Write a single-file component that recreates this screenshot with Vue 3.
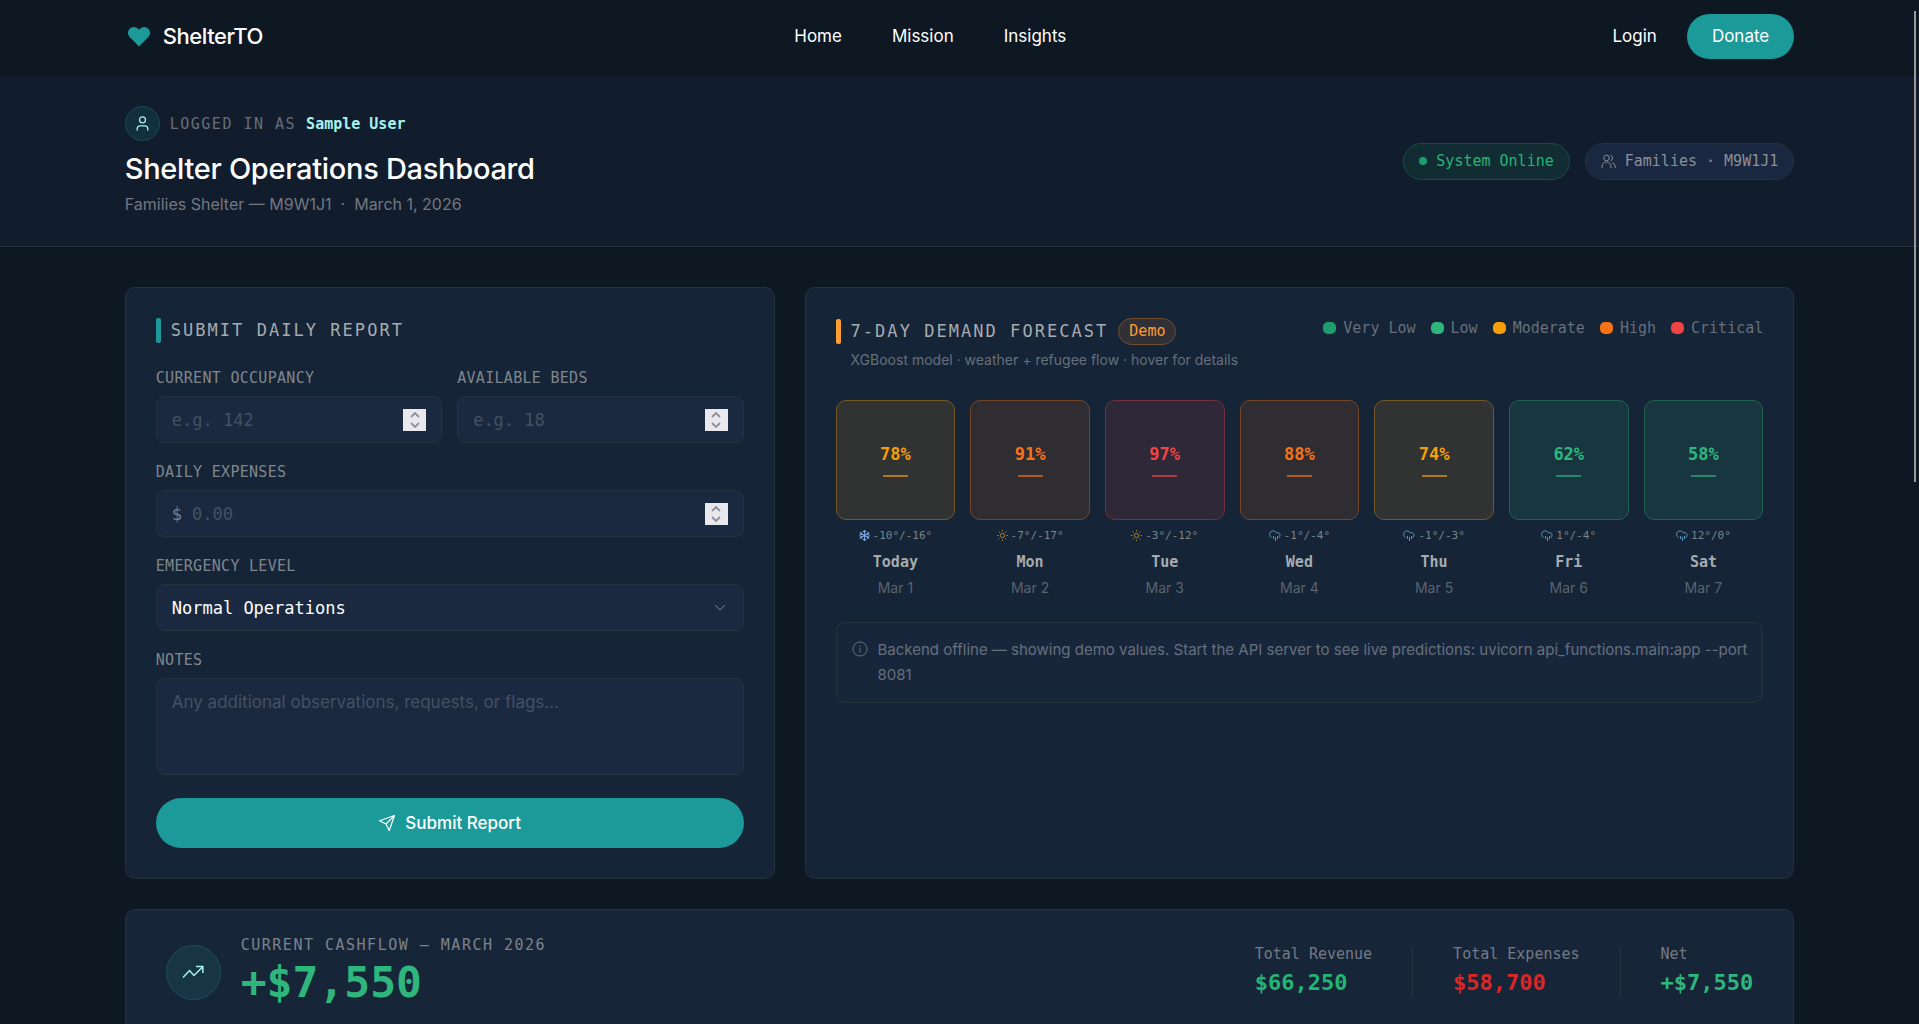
<template>
  <div class="page">
    <nav class="nav">
      <a href="#" class="nav__brand">
        <svg class="nav__heart" viewBox="0 0 24 22" aria-hidden="true">
          <path d="M12 21.5 2.2 11.6a6.2 6.2 0 0 1 0-8.8 6.2 6.2 0 0 1 8.8 0l1 1 1-1a6.2 6.2 0 0 1 8.8 0 6.2 6.2 0 0 1 0 8.8z" fill="currentColor" />
        </svg>
        ShelterTO
      </a>
      <div class="nav__links">
        <a v-for="link in links" :key="link" href="#">{{ link }}</a>
      </div>
      <div class="nav__actions">
        <a href="#">Login</a>
        <button type="button" class="donate">Donate</button>
      </div>
    </nav>

    <header class="header">
      <div class="header__info">
        <div class="user">
          <span class="user__avatar">
            <svg width="13" height="15" viewBox="0 0 13 15" fill="none" stroke="currentColor" stroke-width="1.3" aria-hidden="true">
              <circle cx="6.5" cy="3.8" r="3" />
              <path d="M1.2 14.6v-1.8a3 3 0 0 1 3-3h4.6a3 3 0 0 1 3 3v1.8" />
            </svg>
          </span>
          <span class="user__label">LOGGED IN AS</span>
          <span class="user__name">Sample User</span>
        </div>
        <h1>Shelter Operations Dashboard</h1>
        <p>Families Shelter — M9W1J1 &nbsp;·&nbsp; March 1, 2026</p>
      </div>
      <div class="header__pills">
        <span class="pill pill--online"><i class="pill__dot"></i>System Online</span>
        <span class="pill">
          <svg width="15" height="15" viewBox="0 0 15 15" fill="none" stroke="currentColor" aria-hidden="true">
            <circle cx="5.5" cy="4" r="2.8" />
            <path d="M1 14v-1.500a4.500 4.500 0 0 1 9 0V14M9.500 1.300a2.800 2.800 0 0 1 0 5.400M11.200 8.800a4 4 0 0 1 3 4V14" />
          </svg>
          Families · M9W1J1
        </span>
      </div>
    </header>

    <main class="content">
      <div class="grid">
        <form class="card report" @submit.prevent>
          <h2 class="title title--report">SUBMIT DAILY REPORT</h2>
          <div class="fields">
            <div v-for="f in numberFields" :key="f.id" class="field" :class="{ 'field--half': !f.prefix }">
              <label :for="f.id">{{ f.label }}</label>
              <div class="box">
                <span v-if="f.prefix" class="box__prefix">{{ f.prefix }}</span>
                <input :id="f.id" v-model="form[f.id]" type="number" :placeholder="f.placeholder" />
                <span class="spinner">
                  <svg width="10" height="16" viewBox="0 0 10 16" fill="none" stroke="currentColor" stroke-width="1.8" aria-hidden="true">
                    <path d="M1 5l4-4 4 4M1 11l4 4 4-4" />
                  </svg>
                </span>
              </div>
            </div>
            <div class="field">
              <label for="level">EMERGENCY LEVEL</label>
              <div class="box">
                <select id="level" v-model="form.level">
                  <option>Normal Operations</option>
                  <option>Elevated</option>
                  <option>Critical</option>
                </select>
                <svg class="chevron" width="12" height="8" viewBox="0 0 12 8" fill="none" stroke="currentColor" aria-hidden="true">
                  <path d="M1 1l5 5 5-5" />
                </svg>
              </div>
            </div>
            <div class="field">
              <label for="notes">NOTES</label>
              <textarea id="notes" v-model="form.notes" placeholder="Any additional observations, requests, or flags..."></textarea>
            </div>
          </div>
          <button type="submit" class="submit">
            <svg width="18" height="18" viewBox="0 0 18 18" fill="none" stroke="currentColor" stroke-width="1.2" stroke-linejoin="round" aria-hidden="true">
              <path d="M16.500 1.500 1.500 6.800l6.500 3.200 3.200 6.500zM16.500 1.500 8 10" />
            </svg>
            Submit Report
          </button>
        </form>

        <section class="card forecast">
          <div class="forecast__head">
            <div>
              <h2 class="title title--forecast">7-DAY DEMAND FORECAST <span class="demo">Demo</span></h2>
              <p class="forecast__sub">XGBoost model · weather + refugee flow · hover for details</p>
            </div>
            <ul class="legend">
              <li v-for="l in legend" :key="l.level" :class="'level-' + l.level"><i></i>{{ l.name }}</li>
            </ul>
          </div>
          <div class="days">
            <div v-for="d in days" :key="d.day" class="day" :class="'level-' + d.level">
              <div class="day__tile">
                <strong>{{ d.value }}%</strong>
                <i></i>
              </div>
              <div class="day__weather">
                <svg v-if="d.icon === 'snow'" class="snow" width="11" height="11" viewBox="0 0 12 12" fill="none" stroke="currentColor" stroke-width="1.100" aria-hidden="true">
                  <path d="M6 0v12M.8 3l10.400 6M11.200 3.000.8 9M4 .8l2 2 2-2M4 11.200l2-2 2 2M.4 5.600l2.600-.7-.7-2.600M11.600 6.400l-2.600.7.7 2.600M.4 6.400l2.600.7-.7 2.600M11.600 5.600 9 4.900l.7-2.600" />
                </svg>
                <svg v-else-if="d.icon === 'sun'" class="sun" width="11" height="11" viewBox="0 0 12 12" fill="none" stroke="currentColor" aria-hidden="true">
                  <circle cx="6" cy="6" r="2.300" />
                  <path d="M6 0v1.600M6 10.400V12M0 6h1.600M10.400 6H12M1.800 1.800l1.100 1.100M9.100 9.100l1.100 1.100M1.800 10.200l1.100-1.100M9.100 2.900l1.100-1.100" />
                </svg>
                <svg v-else class="rain" width="12" height="11" viewBox="0 0 12 11" fill="none" stroke="currentColor" aria-hidden="true">
                  <path d="M2.500 7.500A3.500 3.500 0 1 1 7.200 2.800a2.600 2.600 0 1 1 2.300 4.900M4.500 6v3M6.500 7v4M8.500 6v3" />
                </svg>
                {{ d.temp }}
              </div>
              <div class="day__name">{{ d.day }}</div>
              <div class="day__date">{{ d.date }}</div>
            </div>
          </div>
          <div class="notice">
            <svg width="16" height="16" viewBox="0 0 16 16" fill="none" stroke="currentColor" aria-hidden="true">
              <circle cx="8" cy="8" r="7" />
              <path d="M8 7v4.500M8 4.500V6" />
            </svg>
            <p>Backend offline — showing demo values. Start the API server to see live predictions: uvicorn api_functions.main:app --port 8081</p>
          </div>
        </section>
      </div>

      <section class="card cashflow">
        <span class="cashflow__icon">
          <svg width="22" height="14" viewBox="0 0 22 14" fill="none" stroke="currentColor" stroke-width="1.500" aria-hidden="true">
            <path d="M1 12.500l6.500-7 4.500 5L20.500 2M14 1.500h6.800v6.500" />
          </svg>
        </span>
        <div>
          <div class="cashflow__label">CURRENT CASHFLOW — MARCH 2026</div>
          <div class="cashflow__value">+$7,550</div>
        </div>
        <dl class="totals">
          <div v-for="t in totals" :key="t.label">
            <dt>{{ t.label }}</dt>
            <dd :class="t.tone">{{ t.value }}</dd>
          </div>
        </dl>
      </section>
    </main>
    <div class="scroll-thumb"></div>
  </div>
</template>

<script setup>
import { reactive } from 'vue';

const links = ['Home', 'Mission', 'Insights'];

const form = reactive({
  occupancy: '',
  beds: '',
  expenses: '',
  level: 'Normal Operations',
  notes: '',
});

const numberFields = [
  { id: 'occupancy', label: 'CURRENT OCCUPANCY', placeholder: 'e.g. 142' },
  { id: 'beds', label: 'AVAILABLE BEDS', placeholder: 'e.g. 18' },
  { id: 'expenses', label: 'DAILY EXPENSES', placeholder: '0.00', prefix: '$' },
];

const legend = [
  { name: 'Very Low', level: 'verylow' },
  { name: 'Low', level: 'low' },
  { name: 'Moderate', level: 'moderate' },
  { name: 'High', level: 'high' },
  { name: 'Critical', level: 'critical' },
];

const days = [
  { day: 'Today', date: 'Mar 1', value: 78, level: 'moderate', icon: 'snow', temp: '-10°/-16°' },
  { day: 'Mon', date: 'Mar 2', value: 91, level: 'high', icon: 'sun', temp: '-7°/-17°' },
  { day: 'Tue', date: 'Mar 3', value: 97, level: 'critical', icon: 'sun', temp: '-3°/-12°' },
  { day: 'Wed', date: 'Mar 4', value: 88, level: 'high', icon: 'rain', temp: '-1°/-4°' },
  { day: 'Thu', date: 'Mar 5', value: 74, level: 'moderate', icon: 'rain', temp: '-1°/-3°' },
  { day: 'Fri', date: 'Mar 6', value: 62, level: 'low', icon: 'rain', temp: '1°/-4°' },
  { day: 'Sat', date: 'Mar 7', value: 58, level: 'low', icon: 'rain', temp: '12°/0°' },
];

const totals = [
  { label: 'Total Revenue', value: '$66,250', tone: 'revenue' },
  { label: 'Total Expenses', value: '$58,700', tone: 'expenses' },
  { label: 'Net', value: '+$7,550', tone: 'net' },
];
</script>

<style>
html {
  background: #0e1822;
  scrollbar-width: none;
}

body {
  margin: 0;
}
</style>

<style scoped>
.page {
  --sans: "Inter", "Liberation Sans", sans-serif;
  --mono: "DejaVu Sans Mono", "Liberation Mono", monospace;
  --line: #26313c;
  min-height: 100vh;
  padding-bottom: 30px;
  box-sizing: border-box;
  background: #0e1822;
  color: #fff;
  font-family: var(--sans);
}

.page *,
.page *::before {
  box-sizing: border-box;
}

a {
  color: inherit;
  text-decoration: none;
}

h1,
h2,
p,
ul,
dl,
dd {
  margin: 0;
  padding: 0;
}

button,
input,
select,
textarea {
  font: inherit;
  color: inherit;
  border: 0;
  margin: 0;
  background: none;
  outline: 0;
}

/* navigation */
.nav {
  display: flex;
  justify-content: space-between;
  align-items: center;
  height: 76px;
  padding: 0 6.5% 4px;
  font-size: 17px;
}

.nav__brand {
  display: flex;
  align-items: center;
  gap: 12px;
  padding-left: 2px;
  font-size: 22px;
  font-weight: 500;
  letter-spacing: -0.02em;
}

.nav__heart {
  width: 24px;
  height: 21px;
  color: #1c9999;
}

.nav__links {
  display: flex;
  gap: 50px;
}

.nav__actions {
  display: flex;
  align-items: center;
  gap: 30px;
  padding-left: 15px;
}

.donate {
  height: 45px;
  padding: 0 25px;
  border-radius: 23px;
  background: #1c9999;
}

/* page header */
.header {
  display: flex;
  justify-content: space-between;
  align-items: center;
  padding: 30px 6.5%;
  background: #111d2d;
  border-bottom: 1px solid var(--line);
}

.user {
  display: flex;
  align-items: center;
  gap: 10px;
  font: 15px var(--mono);
}

.user__avatar {
  display: grid;
  place-items: center;
  width: 35px;
  height: 35px;
  border: 1px solid #1a4b54;
  border-radius: 50%;
  background: #122f3d;
  color: #a5f3f0;
}

.user__label {
  color: #686d75;
  letter-spacing: 0.1em;
}

.user__name {
  color: #a5f3f0;
  font-weight: bold;
}

h1 {
  margin-top: 8px;
  font-size: 29px;
  line-height: 40px;
  font-weight: 500;
  letter-spacing: -0.01em;
}

.header p {
  margin-top: 3px;
  color: #73777f;
  font-size: 16px;
  line-height: 24px;
}

.header__pills {
  display: flex;
  gap: 15px;
}

.pill {
  display: flex;
  align-items: center;
  gap: 9px;
  height: 37px;
  padding: 0 15px;
  border: 1px solid #28323e;
  border-radius: 19px;
  background: #192740;
  color: #8b9099;
  font: 15px var(--mono);
}

.pill--online {
  border-color: #15503f;
  background: #122c34;
  color: #22b573;
}

.pill__dot {
  width: 8px;
  height: 8px;
  border-radius: 50%;
  background: #1d9e6c;
}

/* cards */
.content {
  display: grid;
  gap: 30px;
  padding: 40px 6.5% 0;
}

.grid {
  display: grid;
  grid-template-columns: 65fr 99fr;
  gap: 30px;
}

.card {
  min-width: 0;
  padding: 30px;
  border: 1px solid var(--line);
  border-radius: 10px;
  background: #152436;
}

.title {
  display: flex;
  align-items: center;
  gap: 10px;
  color: #a6abb0;
  font: 17px/25px var(--mono);
  letter-spacing: 0.12em;
}

.title::before {
  content: "";
  width: 5px;
  height: 25px;
  border-radius: 2px;
  background: #1c9999;
}

.title--forecast::before {
  background: #ff9d2e;
}

/* report form */
.fields {
  display: flex;
  flex-wrap: wrap;
  gap: 20px 15px;
  margin: 26px 0 23px;
}

.field {
  width: 100%;
}

.field--half {
  flex: 1;
  width: auto;
}

.field label {
  display: block;
  margin-bottom: 8px;
  color: #80868d;
  font: 15px/19px var(--mono);
  letter-spacing: 0.02em;
}

.box,
textarea {
  border: 1px solid #28323c;
  border-radius: 8px;
  background: #1a2940;
}

.box {
  position: relative;
  display: flex;
  align-items: center;
  height: 47px;
  padding: 0 15px;
  font: 17px var(--mono);
}

.box__prefix {
  margin-right: 10px;
  color: #747d88;
}

.box input {
  flex: 1;
  min-width: 0;
  padding: 0;
  appearance: textfield;
}

.box select {
  width: 100%;
  height: 100%;
  padding: 0;
  appearance: none;
}

.box option {
  background: #1a2940;
}

.chevron {
  position: absolute;
  right: 17px;
  color: #7d8794;
  pointer-events: none;
}

.spinner {
  display: grid;
  place-items: center;
  width: 23px;
  height: 22px;
  background: #e9e9ed;
  color: #8f8f9d;
}

textarea {
  display: block;
  width: 100%;
  height: 97px;
  padding: 11px 15px;
  font-size: 17px;
  line-height: 24px;
  resize: none;
}

input::placeholder,
textarea::placeholder {
  color: #445163;
  opacity: 1;
}

.submit {
  display: flex;
  justify-content: center;
  align-items: center;
  gap: 9px;
  width: 100%;
  height: 50px;
  border-radius: 25px;
  background: #1c9999;
  font-size: 17px;
  font-weight: 500;
}

/* forecast */
.forecast__head {
  display: flex;
  justify-content: space-between;
  align-items: flex-start;
}

.demo {
  padding: 0 10px;
  border: 1px solid #70502f;
  border-radius: 14px;
  background: #303036;
  color: #ff9d2e;
  font-size: 15px;
  letter-spacing: 0;
}

.forecast__sub {
  margin-left: 15px;
  color: #66707c;
  font-size: 14px;
  line-height: 30px;
}

.legend {
  display: flex;
  gap: 15px;
  list-style: none;
  color: #66707c;
  font: 15px/20px var(--mono);
}

.legend li {
  display: flex;
  align-items: center;
  gap: 7px;
}

.legend i {
  width: 13px;
  height: 12px;
  border-radius: 5px;
  background: var(--level);
}

.level-verylow {
  --level: #1d9e6c;
}

.level-low {
  --level: #2eb67d;
}

.level-moderate {
  --level: #f59e0b;
}

.level-high {
  --level: #f97316;
}

.level-critical {
  --level: #ef4444;
}

.days {
  display: grid;
  grid-template-columns: repeat(7, 1fr);
  gap: 15px;
  margin-top: 25px;
}

.day {
  text-align: center;
}

.day__tile {
  display: flex;
  flex-direction: column;
  justify-content: center;
  align-items: center;
  gap: 11px;
  aspect-ratio: 1;
  padding-top: 2px;
  border: 1px solid color-mix(in srgb, var(--level) 42%, #152436);
  border-radius: 10px;
  background: color-mix(in srgb, var(--level) 12%, #152436);
  color: var(--level);
  font: 17px/20px var(--mono);
}

.day__tile i {
  width: 25px;
  height: 2px;
  background: var(--level);
  opacity: 0.65;
}

.day__weather {
  display: flex;
  justify-content: center;
  align-items: center;
  gap: 3px;
  margin-top: 8px;
  color: #7b838c;
  font: 11px/16px var(--mono);
}

.snow {
  color: #7ba6e0;
}

.sun {
  color: #b38a2c;
}

.rain {
  color: #5793b8;
}

.day__name {
  margin-top: 5px;
  color: #a6abb0;
  font: bold 15px/26px var(--mono);
}

.day__date {
  color: #59636f;
  font-size: 14px;
  line-height: 26px;
}

.notice {
  display: flex;
  gap: 10px;
  margin-top: 21px;
  padding: 14px 10px 15px 15px;
  border: 1px solid #28323c;
  border-radius: 8px;
  background: #18263c;
  color: #66707c;
  font-size: 15px;
  line-height: 25px;
}

.notice svg {
  flex: none;
  margin-top: 4px;
}

/* cashflow */
.cashflow {
  display: flex;
  align-items: center;
  gap: 20px;
  padding: 25px 40px;
  background: #172538;
}

.cashflow__icon {
  display: grid;
  place-items: center;
  width: 55px;
  height: 55px;
  border: 1px solid #1b505b;
  border-radius: 50%;
  background: #183546;
  color: #a5f3f0;
}

.cashflow__label {
  color: #7d838b;
  font: 15px/20px var(--mono);
  letter-spacing: 0.1em;
}

.cashflow__value {
  color: #2eb67d;
  font: bold 43px/54px var(--mono);
}

.totals {
  display: flex;
  margin-left: auto;
}

.totals > div + div {
  margin-left: 40px;
  padding-left: 40px;
  border-left: 1px solid #2a3542;
}

dt {
  color: #737b86;
  font: 15px/14px var(--mono);
}

dd {
  margin-top: 8px;
  font: bold 22px/28px var(--mono);
}

.revenue {
  color: #22b573;
}

.expenses {
  color: #dc2626;
}

.net {
  color: #2eb67d;
}

.scroll-thumb {
  position: fixed;
  top: 11px;
  right: 3px;
  width: 2px;
  height: 46vh;
  background: #999;
}
</style>
